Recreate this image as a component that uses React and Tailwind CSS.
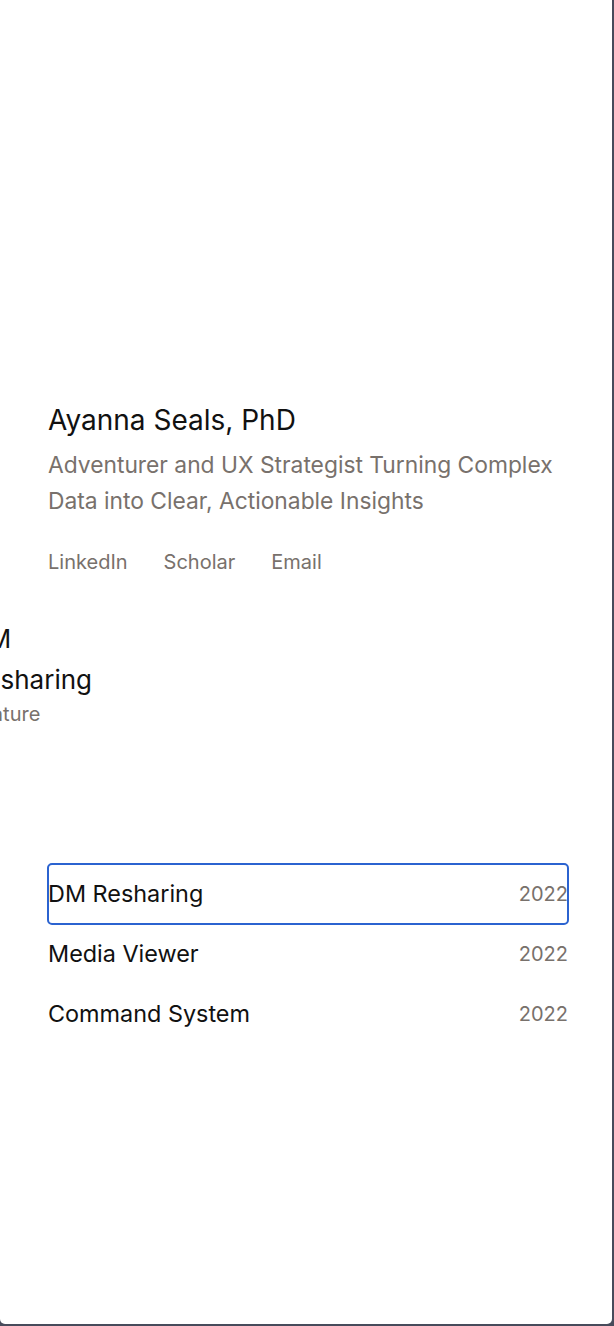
import React from 'react';

const links = ['LinkedIn', 'Scholar', 'Email'];

const projects = [
  { id: 1, name: 'DM Resharing', year: '2022', focused: true },
  { id: 2, name: 'Media Viewer', year: '2022' },
  { id: 3, name: 'Command System', year: '2022' }
];

const App = () => {
  return (
    <div className="w-[614px] h-[1326px] bg-[#474b5b] font-['Inter',sans-serif]">
      <div className="w-[612px] h-[1324px] bg-white rounded-b-[5px] overflow-hidden">
        {/* Intro */}
        <section className="pt-[403px] pl-12 pr-11">
          <h1 className="text-[28px] leading-[34px] text-[#111111]">Ayanna Seals, PhD</h1>
          <p className="mt-[10px] max-w-[520px] text-[22.8px] leading-[36px] text-[#78716c]">
            Adventurer and UX Strategist Turning Complex Data into Clear, Actionable Insights
          </p>
          <div className="mt-[29px] flex gap-9 text-[20px] leading-[28px] text-[#78716c]">
            {links.map(link => (
              <a key={link} href="#" className="block">{link}</a>
            ))}
          </div>
        </section>

        <div className="mt-[42px] overflow-hidden">
          <div className="-ml-[31px] w-[150px]">
            <h2 className="text-[26px] leading-[41px] text-[#111111]">DM Resharing</h2>
            <p className="text-[20px] leading-[28px] text-[#78716c]">Feature</p>
          </div>
        </div>

        {/* Project list */}
        <ul className="mt-[136px] pl-12 pr-11">
          {projects.map(p => (
            <li
              key={p.id}
              className={`flex items-center justify-between h-[60px] rounded-[4px] ${p.focused ? 'outline-2 outline-[#2b63d0] outline-offset-[-1px]' : ''}`}
            >
              <span className="text-[23.4px] text-[#111111]">{p.name}</span>
              <span className="text-[20px] text-[#78716c]">{p.year}</span>
            </li>
          ))}
        </ul>
      </div>
    </div>
  );
};

export default App;
